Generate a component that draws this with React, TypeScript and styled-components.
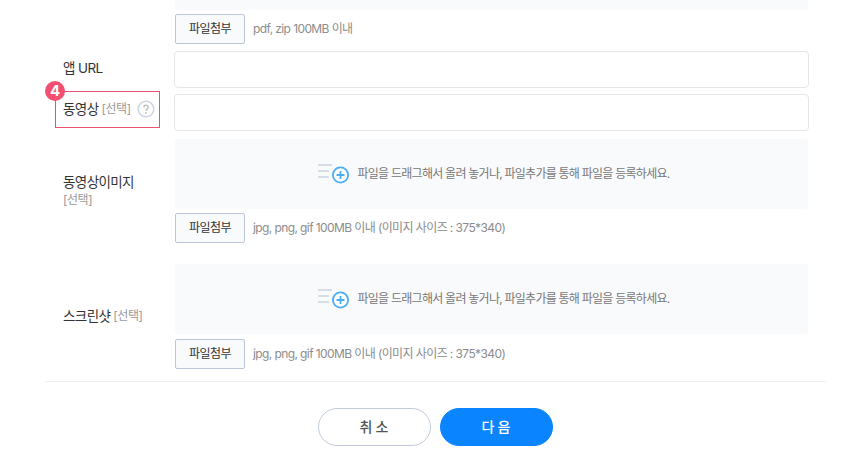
import React from 'react';
import styled, { createGlobalStyle } from 'styled-components';

const GlobalStyle = createGlobalStyle`
  html, body {
    margin: 0;
    padding: 0;
    background: #fff;
    overflow: hidden;
  }
  * {
    box-sizing: border-box;
  }
  body {
    font-family: Inter, "Noto Sans CJK KR", sans-serif;
  }
`;

const Page = styled.div`
  width: 868px;
  height: 473px;
  padding: 0 42px 0 45px;
  overflow: hidden;
`;

const Row = styled.div<{ $top?: number }>`
  display: grid;
  grid-template-columns: 130px 633px;
  margin-top: ${(p) => p.$top ?? 0}px;
`;

const Label = styled.div<{ $shift?: number }>`
  position: relative;
  display: flex;
  flex-direction: column;
  justify-content: center;
  padding-left: 18px;
  padding-bottom: ${(p) => p.$shift ?? 0}px;
  font-size: 13.5px;
  letter-spacing: -0.6px;
  line-height: 20px;
  color: #333;
`;

const LabelLine = styled.div`
  display: flex;
  align-items: center;
`;

const Optional = styled.span<{ $block?: boolean }>`
  margin-left: ${(p) => (p.$block ? 0 : 3)}px;
  font-size: 12px;
  letter-spacing: -0.4px;
  line-height: 16px;
  color: #999;
`;

const Highlight = styled.div`
  position: absolute;
  left: 10px;
  top: -3px;
  width: 105px;
  height: 37px;
  border: 1px solid #e9526f;
`;

const Badge = styled.div`
  position: absolute;
  left: 0;
  top: -13px;
  width: 20px;
  height: 20px;
  border-radius: 50%;
  background: #f2506e;
  color: #fff;
  font-size: 15px;
  font-weight: 700;
  letter-spacing: 0;
  line-height: 20px;
  text-align: center;
`;

const Help = styled.span`
  display: inline-flex;
  margin-left: 6px;
`;

const Field = styled.div`
  display: flex;
  flex-direction: column;
`;

const Strip = styled.div`
  width: 633px;
  height: 10px;
  background: #f9fafc;
`;

const Input = styled.input`
  display: block;
  width: 635px;
  height: 37px;
  margin-left: -1px;
  border: 1px solid #e6e6e6;
  border-radius: 4px;
  background: #fff;
  outline: none;
`;

const Drop = styled.div`
  display: flex;
  align-items: center;
  justify-content: center;
  gap: 8px;
  width: 633px;
  height: 70px;
  padding: 0 0 3px 4px;
  border-radius: 3px;
  background: #f9fafc;
  font-size: 12px;
  letter-spacing: -0.75px;
  color: #777;
`;

const FileLine = styled.div<{ $top: number }>`
  display: flex;
  align-items: center;
  gap: 8px;
  margin-top: ${(p) => p.$top}px;
`;

const FileButton = styled.button`
  width: 70px;
  height: 30px;
  padding: 0 0 3px;
  border: 1px solid #bcc6d9;
  border-radius: 2px;
  background: #f8fafc;
  font-family: inherit;
  font-size: 12px;
  letter-spacing: -0.6px;
  color: #333;
`;

const Hint = styled.span`
  padding-bottom: 3px;
  font-size: 12px;
  letter-spacing: -0.6px;
  color: #8c8c8c;
`;

const Divider = styled.hr`
  width: 781px;
  height: 1px;
  margin: 12px 0 0;
  border: 0;
  background: #eeeff2;
`;

const Actions = styled.div`
  display: flex;
  justify-content: center;
  gap: 9px;
  width: 780px;
  margin-top: 26px;
`;

const ActionButton = styled.button<{ $primary?: boolean }>`
  width: 113px;
  height: 38px;
  padding: 0 0 2px 3px;
  border: 1px solid ${(p) => (p.$primary ? '#0a84ff' : '#c3cbdb')};
  border-radius: 19px;
  background: ${(p) => (p.$primary ? '#0a84ff' : '#fff')};
  color: ${(p) => (p.$primary ? '#fff' : '#555')};
  font-family: inherit;
  font-size: 14px;
  font-weight: 500;
  letter-spacing: 3px;
`;

const HelpIcon = () => (
  <svg width="18" height="18" viewBox="0 0 18 18" fill="none">
    <circle cx="9" cy="9" r="7.8" stroke="#ccd5e3" strokeWidth="1.6" />
    <path d="M6.8 7.2a2.2 2.2 0 1 1 3.4 1.9c-.8.5-1.2.9-1.2 1.7" stroke="#b9b9b9" strokeWidth="1.3" />
    <circle cx="9" cy="12.9" r=".8" fill="#b9b9b9" />
  </svg>
);

const AddFileIcon = () => (
  <svg width="32" height="20" viewBox="0 0 32 20" fill="none" overflow="visible">
    <path d="M0 2h14M0 8h11M0 14h11" stroke="#ccd3e0" strokeWidth="1.5" />
    <circle cx="22.5" cy="12" r="7.6" fill="#fff" stroke="#4badf2" strokeWidth="1.8" />
    <path d="M22.5 8v8M18.5 12h8" stroke="#4badf2" strokeWidth="1.8" />
  </svg>
);

const DropZone = () => (
  <Drop>
    <AddFileIcon />
    파일을 드래그해서 올려 놓거나, 파일추가를 통해 파일을 등록하세요.
  </Drop>
);

const IMAGE_HINT = 'jpg, png, gif 100MB 이내 (이미지 사이즈 : 375*340)';

export default function App() {
  return (
    <Page>
      <GlobalStyle />
      <Row>
        <div />
        <Field>
          <Strip />
          <FileLine $top={4}>
            <FileButton>파일첨부</FileButton>
            <Hint>pdf, zip 100MB 이내</Hint>
          </FileLine>
        </Field>
      </Row>
      <Row $top={7}>
        <Label $shift={3}>앱 URL</Label>
        <Input />
      </Row>
      <Row $top={6}>
        <Label $shift={8}>
          <Highlight />
          <Badge>4</Badge>
          <LabelLine>
            동영상 <Optional>[선택]</Optional>
            <Help>
              <HelpIcon />
            </Help>
          </LabelLine>
        </Label>
        <Input />
      </Row>
      <Row $top={8}>
        <Label $shift={2}>
          동영상이미지
          <Optional $block>[선택]</Optional>
        </Label>
        <Field>
          <DropZone />
          <FileLine $top={4}>
            <FileButton>파일첨부</FileButton>
            <Hint>{IMAGE_HINT}</Hint>
          </FileLine>
        </Field>
      </Row>
      <Row $top={21}>
        <Label $shift={2}>
          <LabelLine>
            스크린샷 <Optional>[선택]</Optional>
          </LabelLine>
        </Label>
        <Field>
          <DropZone />
          <FileLine $top={5}>
            <FileButton>파일첨부</FileButton>
            <Hint>{IMAGE_HINT}</Hint>
          </FileLine>
        </Field>
      </Row>
      <Divider />
      <Actions>
        <ActionButton>취소</ActionButton>
        <ActionButton $primary>다음</ActionButton>
      </Actions>
    </Page>
  );
}
